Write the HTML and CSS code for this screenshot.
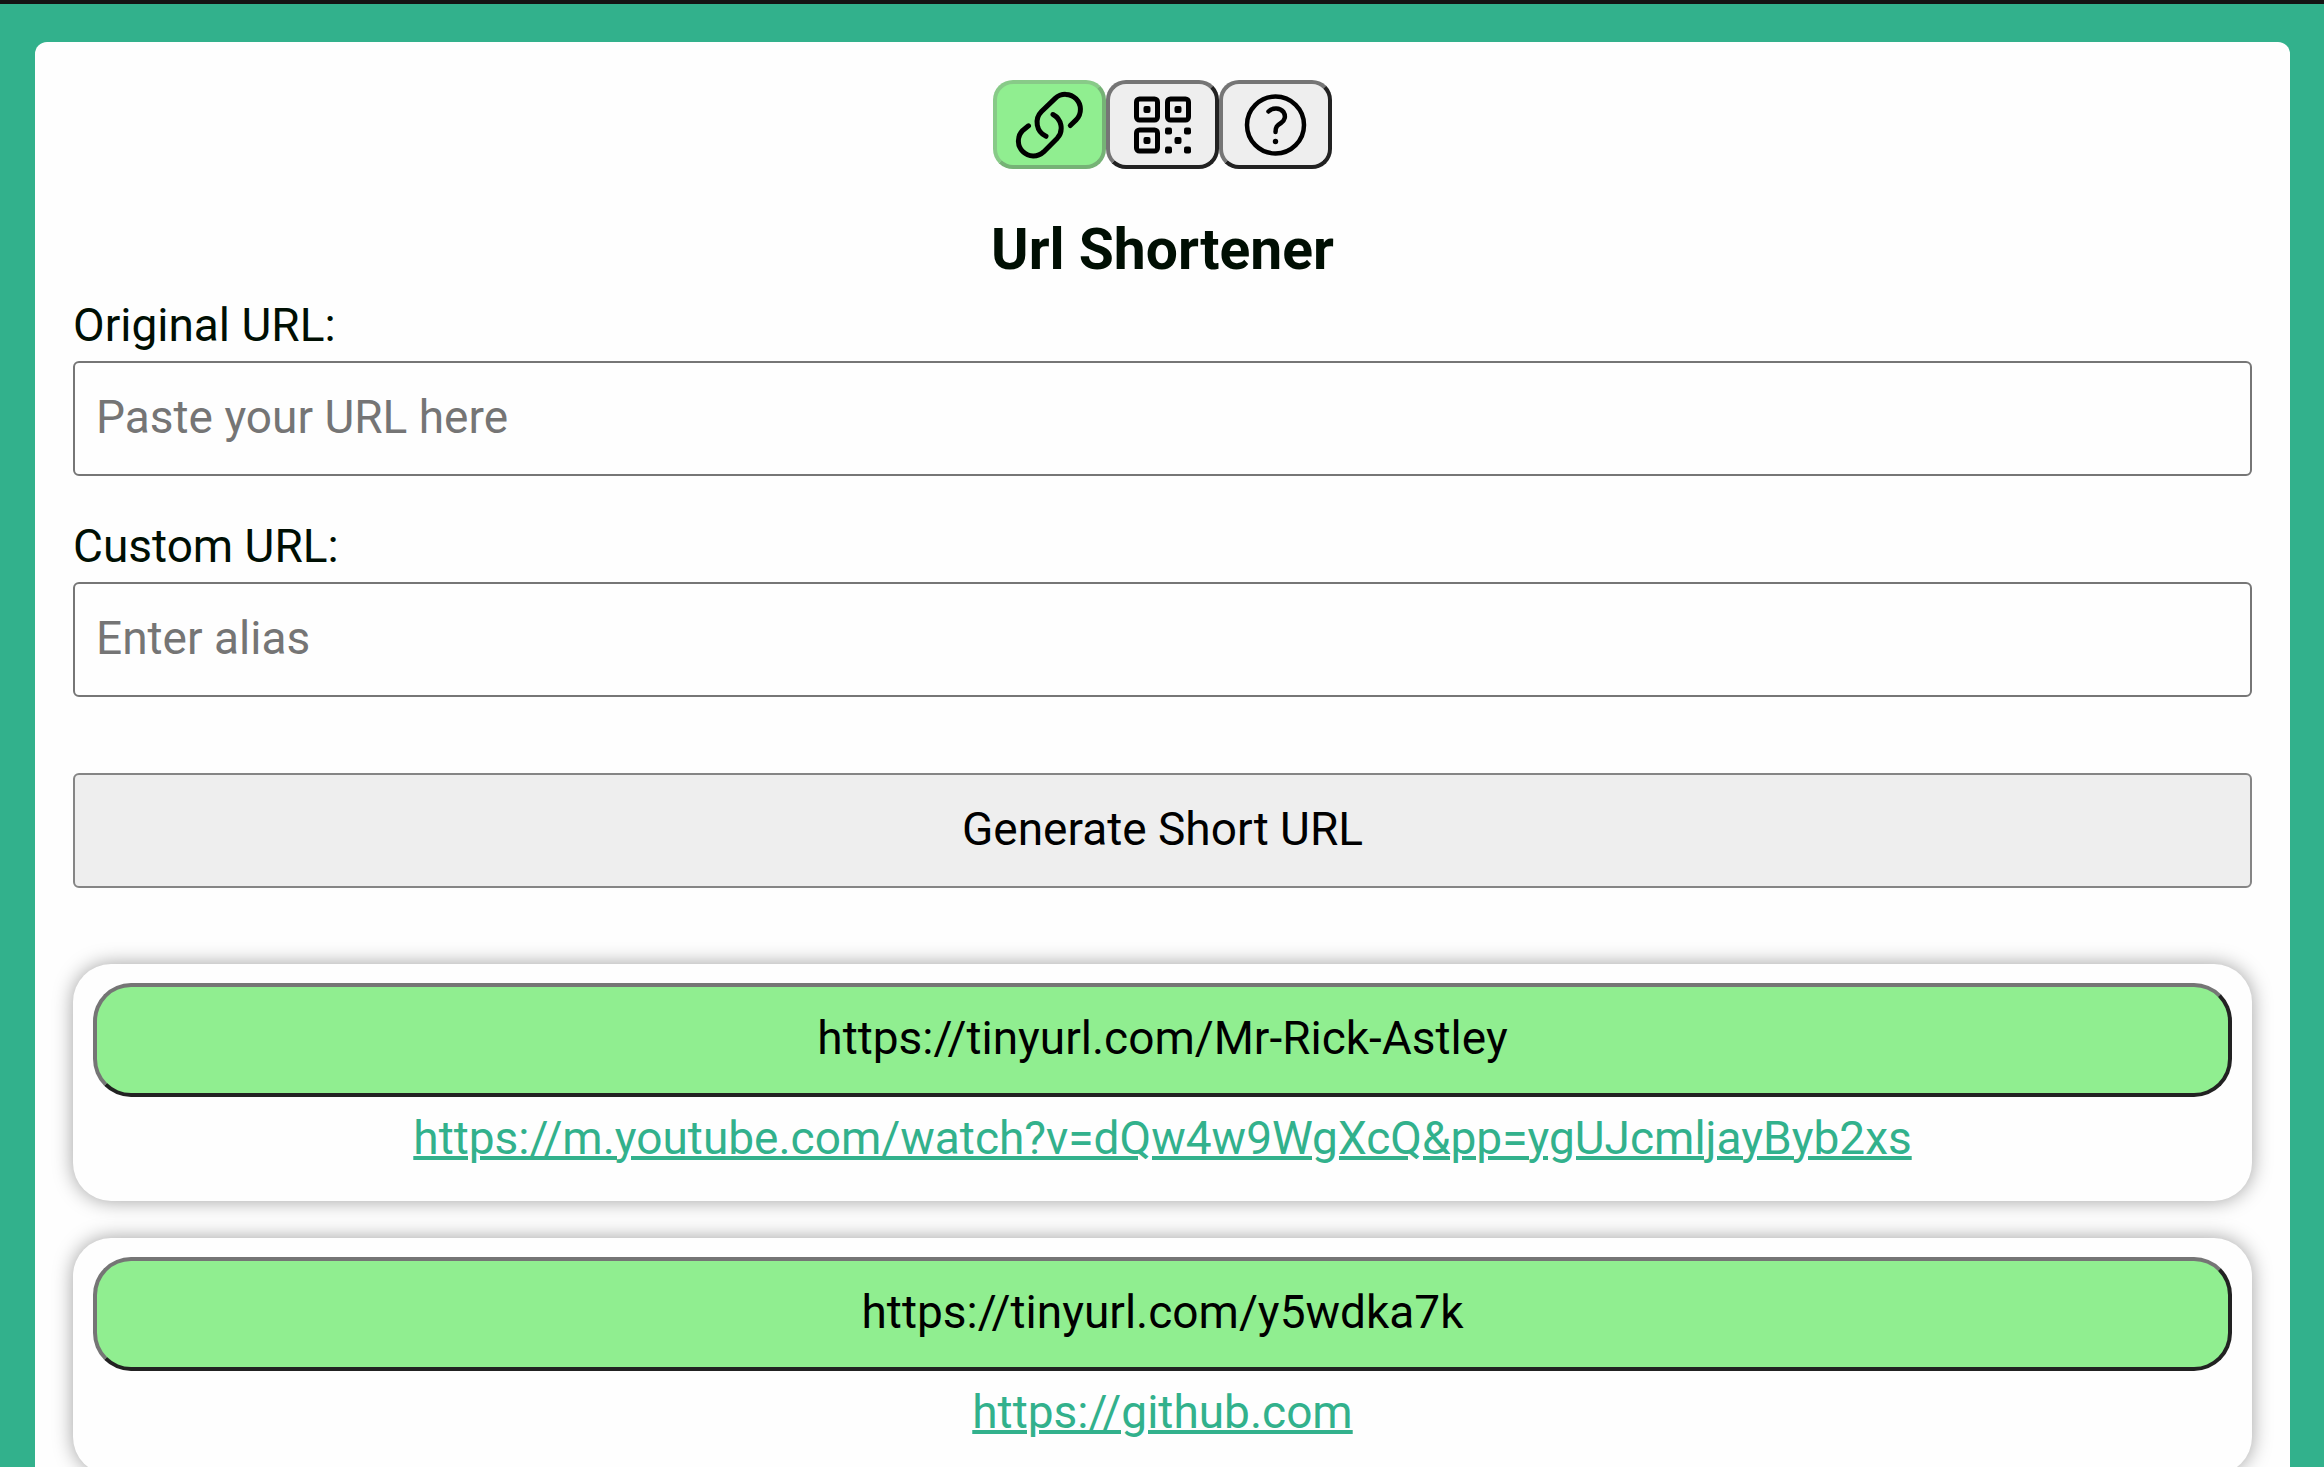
FILE: index.html
```html
<!DOCTYPE html>
<html lang="en">
<head>
<meta charset="utf-8">
<meta name="viewport" content="width=device-width, initial-scale=1">
<title>Url Shortener</title>
<link rel="stylesheet" href="styles.css">
</head>
<body>
<main class="panel">
  <nav class="tabs">
    <button class="tab" type="button" disabled aria-label="Url shortener">
      <svg class="icon" viewBox="0 0 76 76" fill="none" stroke="currentColor" stroke-width="5" stroke-linecap="round" stroke-linejoin="round">
        <path d="M34 49.300A15.300 15.300 0 0 1 29.500 24.600L43.200 11.400A15 15 0 0 1 64.400 32.600L58.300 38.500"/>
        <path d="M41 27.500A15.300 15.300 0 0 1 45.300 51.200L31.600 64.900A15 15 0 0 1 10.400 43.700L16.500 38.800"/>
      </svg>
    </button>
    <button class="tab" type="button" aria-label="QR code">
      <svg class="icon" viewBox="0 0 76 76" fill="none" stroke="currentColor" stroke-width="5">
        <rect x="11.500" y="12" width="21" height="21" rx="3"/>
        <rect x="42.500" y="12" width="21" height="21" rx="3"/>
        <rect x="11.500" y="43" width="21" height="21" rx="3"/>
        <g fill="currentColor" stroke="none">
          <rect x="18.500" y="19" width="7" height="7" rx="2"/>
          <rect x="49.500" y="19" width="7" height="7" rx="2"/>
          <rect x="18.500" y="50" width="7" height="7" rx="2"/>
          <rect x="49.500" y="50" width="7" height="7" rx="2"/>
          <rect x="40" y="40.500" width="7" height="7" rx="2"/>
          <rect x="59" y="40.500" width="7" height="7" rx="2"/>
          <rect x="40" y="59.500" width="7" height="7" rx="2"/>
          <rect x="59" y="59.500" width="7" height="7" rx="2"/>
        </g>
      </svg>
    </button>
    <button class="tab" type="button" aria-label="Help">
      <svg class="icon" viewBox="0 0 76 76" fill="none" stroke="currentColor" stroke-width="4.500" stroke-linecap="round" stroke-linejoin="round">
        <circle cx="37.500" cy="38" r="28.500"/>
        <path d="M30.500 24.500C34.500 20.500 42 20.500 45.500 25C48 29 47 33.500 43 36C39 38.500 37.500 40 37.500 45"/>
        <circle cx="37.500" cy="54.500" r="2.700" fill="currentColor" stroke="none"/>
      </svg>
    </button>
  </nav>

  <h1 class="title">Url Shortener</h1>

  <form class="form">
    <div class="field">
      <label for="original">Original URL:</label>
      <input class="input" id="original" type="text" placeholder="Paste your URL here">
    </div>
    <div class="field">
      <label for="alias">Custom URL:</label>
      <input class="input" id="alias" type="text" placeholder="Enter alias">
    </div>
    <button class="submit" type="button">Generate Short URL</button>
  </form>

  <section class="results">
    <article class="result">
      <button class="short" type="button">https://tinyurl.com/Mr-Rick-Astley</button>
      <a class="long" href="https://m.youtube.com/watch?v=dQw4w9WgXcQ&amp;pp=ygUJcmljayByb2xs">https://m.youtube.com/watch?v=dQw4w9WgXcQ&amp;pp=ygUJcmljayByb2xs</a>
    </article>
    <article class="result">
      <button class="short" type="button">https://tinyurl.com/y5wdka7k</button>
      <a class="long" href="https://github.com">https://github.com</a>
    </article>
  </section>
</main>
</body>
</html>
```
FILE: styles.css
```css
* {
  box-sizing: border-box;
}

body {
  margin: 0;
  padding: 38px 34px 38px 35px;
  border-top: 4px solid #141414;
  background: #32b18c;
  color: #000f03;
  font-family: Roboto, sans-serif;
  font-size: 46px;
  line-height: 54px;
}

button,
input {
  font: inherit;
}

.panel {
  padding: 38px;
  border-radius: 12px;
  background: #fefefe;
}

.tabs {
  display: flex;
  justify-content: center;
}

.tab {
  display: flex;
  align-items: center;
  justify-content: center;
  width: 113px;
  height: 89px;
  padding: 0;
  border: 4px solid;
  border-color: #757575 #222 #222 #757575;
  border-radius: 20px;
  background: #eee;
  color: #000;
}

.tab:disabled {
  border-color: #88ca88 #76b276 #76b276 #88ca88;
  background: #90ee90;
}

.icon {
  display: block;
  width: 76px;
  height: 76px;
}

.title {
  margin: 47px 0 15px;
  font-size: 57px;
  font-weight: 700;
  line-height: 67px;
  text-align: center;
}

.form {
  display: flex;
  flex-direction: column;
}

.field {
  display: flex;
  flex-direction: column;
  gap: 9px;
  margin-bottom: 43px;
}

.input {
  width: 100%;
  height: 115px;
  padding: 0 21px 4px;
  border: 2px solid #767676;
  border-radius: 6px;
  background: #fefefe;
}

.input::placeholder {
  color: #757575;
}

.submit {
  height: 115px;
  margin: 33px 0 76px;
  padding: 0 21px 4px;
  border: 2px solid #858585;
  border-radius: 6px;
  background: #eee;
  color: #000;
}

.results {
  display: flex;
  flex-direction: column;
  gap: 37px;
}

.result {
  display: flex;
  flex-direction: column;
  align-items: center;
  gap: 14px;
  padding: 19px 20px 36px;
  border-radius: 38px;
  background: #fefefe;
  box-shadow: 0 0 20px #a0a0a0;
}

.short {
  width: 100%;
  height: 114px;
  padding: 0 21px 4px;
  border: 4px solid;
  border-color: #757575 #222 #222 #757575;
  border-radius: 38px;
  background: #90ee90;
  color: #000;
}

.long {
  color: #32b18c;
  text-decoration-thickness: 4px;
}
```
